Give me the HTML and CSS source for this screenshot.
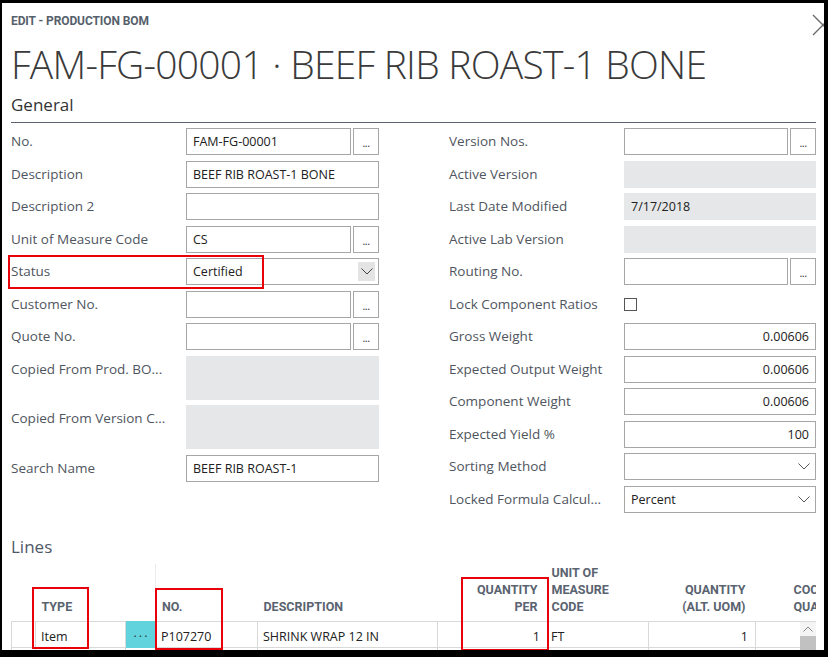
FILE: index.html
```html
<!DOCTYPE html>
<html>
<head>
<meta charset="utf-8">
<link rel="stylesheet" href="styles.css">
</head>
<body>
<div class="window">
  <div class="close" aria-label="Close">
    <svg width="22" height="22" viewBox="0 0 22 22"><path d="M1 1 L21 21 M21 1 L1 21" stroke="#6b6b6b" stroke-width="1.4" fill="none"/></svg>
  </div>
  <div class="caption">EDIT - PRODUCTION BOM</div>
  <h1 class="title">FAM-FG-00001 · BEEF RIB ROAST-1 BONE</h1>
  <div class="section-head">General</div>

  <div class="form">
    <div class="col">
      <div class="row"><div class="label">No.</div><div class="field lookup"><div class="input">FAM-FG-00001</div><div class="btn">...</div></div></div>
      <div class="row"><div class="label">Description</div><div class="field"><div class="input">BEEF RIB ROAST-1 BONE</div></div></div>
      <div class="row"><div class="label">Description 2</div><div class="field"><div class="input"></div></div></div>
      <div class="row"><div class="label">Unit of Measure Code</div><div class="field lookup"><div class="input">CS</div><div class="btn">...</div></div></div>
      <div class="row"><div class="label">Status</div><div class="field"><div class="input select">Certified<span class="chev boxed"><svg width="12" height="7" viewBox="0 0 12 7"><path d="M0.5 0.5 L6 6 L11.5 0.5" stroke="#444" stroke-width="1" fill="none"/></svg></span></div></div></div>
      <div class="row"><div class="label">Customer No.</div><div class="field lookup"><div class="input"></div><div class="btn">...</div></div></div>
      <div class="row"><div class="label">Quote No.</div><div class="field lookup"><div class="input"></div><div class="btn">...</div></div></div>
      <div class="row tall"><div class="label">Copied From Prod. BO...</div><div class="field"><div class="input ro"></div></div></div>
      <div class="row tall"><div class="label">Copied From Version C...</div><div class="field"><div class="input ro"></div></div></div>
      <div class="row"><div class="label">Search Name</div><div class="field"><div class="input">BEEF RIB ROAST-1</div></div></div>
    </div>
    <div class="col">
      <div class="row"><div class="label">Version Nos.</div><div class="field lookup"><div class="input"></div><div class="btn">...</div></div></div>
      <div class="row"><div class="label">Active Version</div><div class="field"><div class="input ro"></div></div></div>
      <div class="row"><div class="label">Last Date Modified</div><div class="field"><div class="input ro">7/17/2018</div></div></div>
      <div class="row"><div class="label">Active Lab Version</div><div class="field"><div class="input ro"></div></div></div>
      <div class="row"><div class="label">Routing No.</div><div class="field lookup"><div class="input"></div><div class="btn">...</div></div></div>
      <div class="row"><div class="label">Lock Component Ratios</div><div class="field"><span class="checkbox"></span></div></div>
      <div class="row"><div class="label">Gross Weight</div><div class="field"><div class="input num">0.00606</div></div></div>
      <div class="row"><div class="label">Expected Output Weight</div><div class="field"><div class="input num">0.00606</div></div></div>
      <div class="row"><div class="label">Component Weight</div><div class="field"><div class="input num">0.00606</div></div></div>
      <div class="row"><div class="label">Expected Yield %</div><div class="field"><div class="input num">100</div></div></div>
      <div class="row"><div class="label">Sorting Method</div><div class="field"><div class="input select"><span class="chev"><svg width="12" height="7" viewBox="0 0 12 7"><path d="M0.5 0.5 L6 6 L11.5 0.5" stroke="#555" stroke-width="1" fill="none"/></svg></span></div></div></div>
      <div class="row"><div class="label">Locked Formula Calcul...</div><div class="field"><div class="input select">Percent<span class="chev"><svg width="12" height="7" viewBox="0 0 12 7"><path d="M0.5 0.5 L6 6 L11.5 0.5" stroke="#555" stroke-width="1" fill="none"/></svg></span></div></div></div>
    </div>
  </div>

  <div class="lines-head">Lines</div>
  <div class="grid-wrap">
    <table class="lines">
      <colgroup>
        <col class="c-sel"><col class="c-type"><col class="c-dots"><col class="c-no"><col class="c-desc"><col class="c-qp"><col class="c-uom"><col class="c-qa"><col class="c-coc">
      </colgroup>
      <thead>
        <tr>
          <th></th>
          <th>TYPE</th>
          <th class="sep"></th>
          <th>NO.</th>
          <th>DESCRIPTION</th>
          <th class="r">QUANTITY<br>PER</th>
          <th>UNIT OF<br>MEASURE<br>CODE</th>
          <th class="r">QUANTITY<br>(ALT. UOM)</th>
          <th class="coc">COCOA<br>QUANTITY</th>
        </tr>
      </thead>
      <tbody>
        <tr>
          <td></td>
          <td>Item</td>
          <td class="dots">···</td>
          <td>P107270</td>
          <td>SHRINK WRAP 12 IN</td>
          <td class="r">1</td>
          <td class="uom">FT</td>
          <td class="r">1</td>
          <td></td>
        </tr>
        <tr>
          <td></td><td></td><td></td><td></td><td></td><td></td><td></td><td></td><td></td>
        </tr>
      </tbody>
    </table>
    <div class="scrollbar">
      <div class="sb-up"><svg width="10" height="6" viewBox="0 0 10 6"><path d="M0.5 5.5 L5 1 L9.5 5.5" stroke="#8a8a8a" stroke-width="1" fill="none"/></svg></div>
      <div class="sb-thumb"></div>
    </div>
  </div>

  <div class="mark mark-status"></div>
  <div class="mark mark-type"></div>
  <div class="mark mark-no"></div>
  <div class="mark mark-qp"></div>
</div>
</body>
</html>
```

FILE: styles.css
```css
* { box-sizing: border-box; }
html, body { margin: 0; padding: 0; }
body {
  background: #000;
  width: 828px;
  height: 657px;
  overflow: hidden;
  font-family: "Open Sans", "Noto Sans", sans-serif;
}
.window {
  position: relative;
  width: 822px;
  height: 647px;
  margin: 3px 0 0 2px;
  background: #fff;
  overflow: hidden;
  padding: 0 8px 0 9px;
}
.close {
  position: absolute;
  right: -10px;
  top: 11px;
  width: 22px;
  height: 22px;
}
.close svg { display: block; }
.caption {
  padding-top: 11px;
  font-family: Roboto, "Liberation Sans", sans-serif;
  font-weight: 700;
  font-size: 12px;
  line-height: 15px;
  color: #565f6b;
  letter-spacing: -0.1px;
}
.title {
  margin: 0;
  padding-top: 10px;
  font-family: "Open Sans", sans-serif;
  font-weight: 300;
  font-size: 39px;
  line-height: 50px;
  color: #3a3a3a;
  letter-spacing: -0.75px;
  white-space: nowrap;
}
.section-head {
  margin-top: 5px;
  font-size: 17px;
  line-height: 22px;
  color: #333;
  padding-bottom: 6px;
  border-bottom: 1px solid #5a6270;
}
.form {
  display: grid;
  grid-template-columns: 438px 1fr;
  margin-top: 5px;
}
.col {
  display: flex;
  flex-direction: column;
  gap: 5.5px;
}
.row {
  display: flex;
  align-items: flex-start;
  height: 27px;
}
.row.tall { height: 44px; }
.label {
  width: 175px;
  flex: none;
  font-size: 13.5px;
  line-height: 27px;
  color: #4f5560;
  white-space: nowrap;
}
.field {
  width: 193px;
  height: 100%;
  display: flex;
  gap: 2px;
  align-items: center;
}
.col + .col .field { width: 192px; }
.input {
  flex: 1;
  height: 100%;
  border: 1px solid #a6a6a6;
  font-size: 12.5px;
  line-height: 25px;
  padding: 0 6px;
  color: #212121;
  white-space: nowrap;
  overflow: hidden;
  position: relative;
}
.input.ro {
  background: #e6e7e8;
  border-color: #e6e7e8;
}
.input.num { text-align: right; }
.input.select { padding-right: 24px; }
.chev {
  position: absolute;
  right: 3px;
  top: 3px;
  width: 17px;
  height: 19px;
  display: flex;
  align-items: center;
  justify-content: center;
}
.chev.boxed { background: #e4e4e4; }
.chev svg { display: block; }
.btn {
  width: 26px;
  flex: none;
  height: 100%;
  border: 1px solid #a6a6a6;
  font-size: 11px;
  line-height: 27px;
  text-align: center;
  color: #333;
  letter-spacing: -0.5px;
}
.checkbox {
  display: block;
  width: 13px;
  height: 13px;
  border: 1px solid #555;
}
.lines-head {
  margin-top: 23px;
  font-size: 17px;
  line-height: 22px;
  color: #4f5866;
}
.grid-wrap {
  position: relative;
  margin-top: 6px;
  width: 805px;
  overflow: hidden;
}
.lines {
  border-collapse: collapse;
  table-layout: fixed;
  width: 805px;
}
.c-sel { width: 24px; }
.c-type { width: 90px; }
.c-dots { width: 30px; }
.c-no { width: 102px; }
.c-desc { width: 180px; }
.c-qp { width: 110px; }
.c-uom { width: 101px; }
.c-qa { width: 107px; }
.c-coc { width: 61px; }
.lines th {
  height: 58px;
  vertical-align: bottom;
  text-align: left;
  font-family: Roboto, "Liberation Sans", sans-serif;
  font-weight: 700;
  font-size: 12.5px;
  line-height: 17px;
  color: #5a6370;
  padding: 0 6px 6px 6px;
  white-space: nowrap;
  overflow: hidden;
}
.lines th:nth-child(4) { border-left: 1px solid #ececec; padding-left: 6px; }
.lines th:nth-child(7) { padding-left: 4px; }
.lines th.r { text-align: right; padding-right: 10px; }
.lines th.coc { padding-left: 38px; padding-right: 0; text-overflow: clip; }
.lines td {
  height: 26px;
  border: 1px solid #d9d9d9;
  font-size: 12.5px;
  line-height: 16px;
  color: #212121;
  padding: 4px 5px 0 5px;
  white-space: nowrap;
  overflow: hidden;
}
.lines td.r { text-align: right; padding-right: 7px; }
.lines td.uom { padding-left: 3px; }
.lines td.dots {
  background: #61d3dc;
  text-align: center;
  letter-spacing: 2px;
  padding-left: 7px;
  color: #333;
  border-color: #61d3dc;
}
.scrollbar {
  position: absolute;
  right: 0;
  top: 58px;
  bottom: 0;
  width: 16px;
  background: #f4f4f4;
}
.sb-up {
  height: 14px;
  display: flex;
  align-items: center;
  justify-content: center;
}
.sb-up svg { display: block; }
.sb-thumb {
  height: 20px;
  background: #c1c1c1;
}
.mark {
  position: absolute;
  border: 2px solid #e8000b;
}
.mark-status { left: 6px; top: 252px; width: 256px; height: 34px; }
.mark-type { left: 30px; top: 584px; width: 57px; height: 62px; }
.mark-no { left: 153px; top: 585px; width: 68px; height: 62px; }
.mark-qp { left: 459px; top: 574px; width: 88px; height: 74px; }
```
